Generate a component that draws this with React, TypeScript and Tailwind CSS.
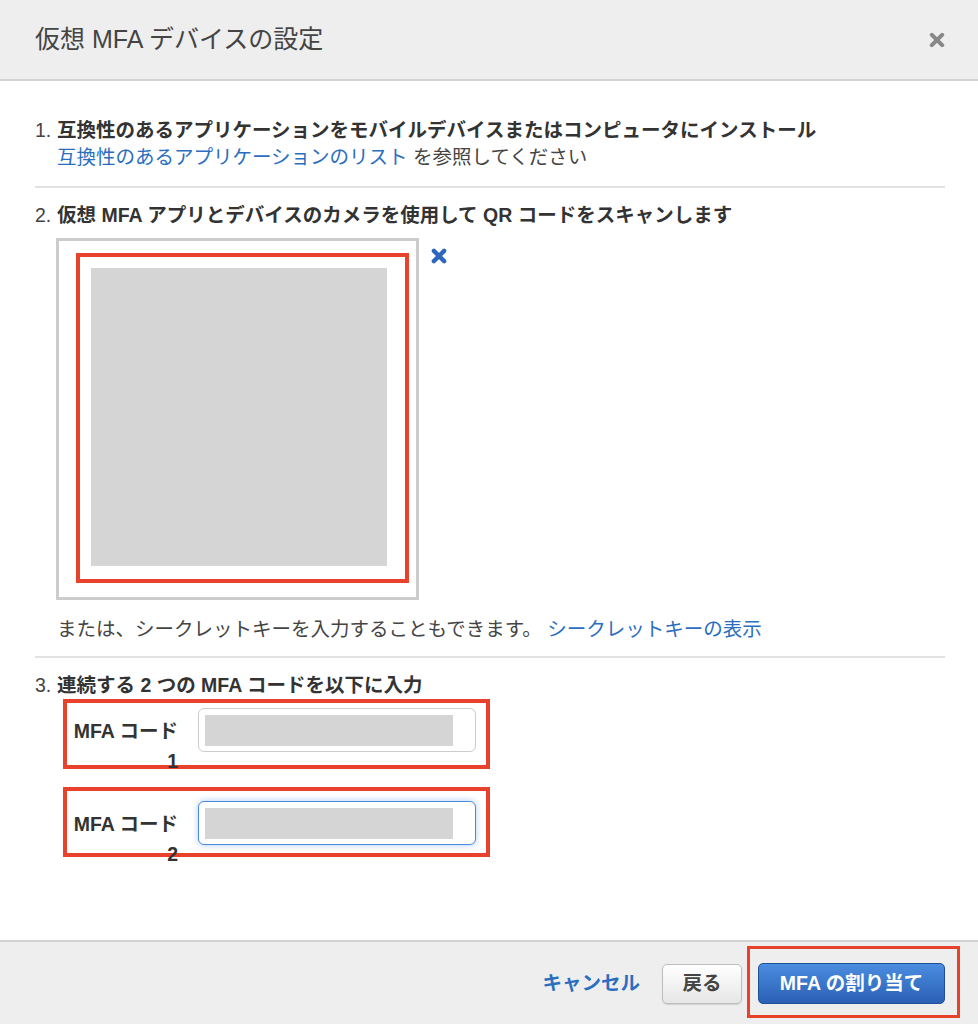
import React from "react";

const FONT = { fontFamily: '"Liberation Sans", "Noto Sans CJK JP", sans-serif' };

function XIcon({ color, size, stroke }: { color: string; size: number; stroke: number }) {
  return (
    <svg width={size} height={size} viewBox="0 0 14 14">
      <path d="M2.5 2.5 L11.5 11.5 M11.5 2.5 L2.5 11.5" stroke={color} strokeWidth={stroke} strokeLinecap="round" />
    </svg>
  );
}

function CodeRow({ n, focus, top, mt }: { n: number; focus?: boolean; top: number; mt: string }) {
  return (
    <div className={`ml-[28px] w-[427px] h-[70px] border-4 border-[#e8412c] flex items-start ${mt}`}>
      <div
        className="ml-[2px] w-[109px] text-right text-[19.5px] font-bold leading-[30px] text-[#333]"
        style={{ marginTop: top + 8 }}
      >
        MFA コード {n}
      </div>
      <div
        className={`ml-[20px] w-[278px] h-[44px] rounded-[6px] bg-white p-[6px] ${
          focus ? "border border-[#4a8be0] shadow-[0_0_6px_rgba(74,139,224,0.45)]" : "border border-[#cccccc]"
        }`}
        style={{ marginTop: top }}
      >
        <div className="w-[248px] h-[31px] bg-[#d5d5d5]" />
      </div>
    </div>
  );
}

export default function App() {
  return (
    <div className="w-[978px] h-[1024px] flex flex-col bg-white text-[#444]" style={FONT}>
      {/* Header */}
      <div className="h-[81px] shrink-0 bg-[#eeeeee] border-b-2 border-[#d2d2d2] flex items-center pl-[35px] pr-[33px]">
        <div className="text-[25px] text-[#444]">仮想 MFA デバイスの設定</div>
        <div className="ml-auto mr-[0px]">
          <XIcon color="#888888" size={16} stroke={3.6} />
        </div>
      </div>

      {/* Body */}
      <div className="flex-1 px-[35px] pr-[33px] pt-[36px] text-[19.5px] leading-[27px]">
        {/* 1 */}
        <div className="flex">
          <span className="w-[22px] shrink-0">1.</span>
          <div>
            <div className="font-bold text-[#333]">互換性のあるアプリケーションをモバイルデバイスまたはコンピュータにインストール</div>
            <div>
              <span className="text-[#2b6ec0]">互換性のあるアプリケーションのリスト</span> を参照してください
            </div>
          </div>
        </div>
        <div className="mt-[15px] h-[2px] bg-[#e2e2e2]" />

        {/* 2 */}
        <div className="mt-[14px] flex">
          <span className="w-[22px] shrink-0">2.</span>
          <div className="font-bold text-[#333]">仮想 MFA アプリとデバイスのカメラを使用して QR コードをスキャンします</div>
        </div>
        <div className="ml-[21px] mt-[9px] flex items-start">
          <div className="w-[363px] h-[362px] border-[3px] border-[#cccccc]">
            <div className="ml-[17px] mt-[12px] w-[333px] h-[330px] border-4 border-[#e8412c]">
              <div className="ml-[11px] mt-[11px] w-[296px] h-[298px] bg-[#d5d5d5]" />
            </div>
          </div>
          <div className="ml-[12px] mt-[10px]">
            <XIcon color="#2d67bb" size={16} stroke={3.8} />
          </div>
        </div>
        <div className="ml-[22px] mt-[16px]">
          または、シークレットキーを入力することもできます。 <span className="text-[#2b6ec0]">シークレットキーの表示</span>
        </div>
        <div className="mt-[13px] h-[2px] bg-[#e2e2e2]" />

        {/* 3 */}
        <div className="mt-[14px] flex">
          <span className="w-[22px] shrink-0">3.</span>
          <div className="font-bold text-[#333]">連続する 2 つの MFA コードを以下に入力</div>
        </div>
        <CodeRow n={1} top={5} mt="mt-0" />
        <CodeRow n={2} top={10} focus mt="mt-[18px]" />
      </div>

      {/* Footer */}
      <div className="h-[84px] shrink-0 bg-[#eeeeee] border-t-2 border-[#d2d2d2] flex items-start justify-end pr-[18px]">
        <div className="mt-[28px] text-[19.5px] leading-[27px] font-bold text-[#2b6ec0]">キャンセル</div>
        <div className="ml-[22px] mt-[22px] w-[80px] h-[40px] rounded-[5px] border border-[#bdbdbd] bg-gradient-to-b from-[#ffffff] to-[#e6e6e6] flex items-center justify-center text-[19.5px] font-bold text-[#444] shadow-[0_1px_1px_rgba(0,0,0,0.12)]">
          戻る
        </div>
        <div className="ml-[5px] mt-[4px] w-[213px] h-[72px] border-[3px] border-[#e8412c]">
          <div className="ml-[8px] mt-[14px] w-[187px] h-[41px] rounded-[5px] border border-[#1f4f99] bg-gradient-to-b from-[#4b8de0] to-[#2b60b5] flex items-center justify-center text-[19.5px] font-bold text-white">
            MFA の割り当て
          </div>
        </div>
      </div>
    </div>
  );
}
